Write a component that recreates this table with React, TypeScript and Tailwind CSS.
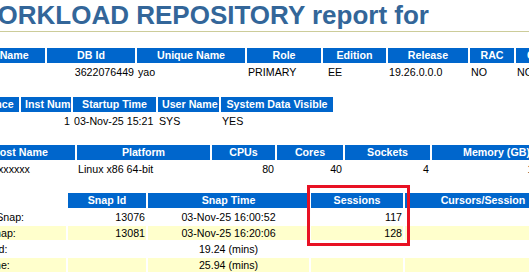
type Col = { label: string; w: string };
type Cell = { v?: string; cls?: string };

const dbCols: Col[] = [
  { label: "DB Name", w: "w-[80px]" },
  { label: "DB Id", w: "w-[88px]" },
  { label: "Unique Name", w: "w-[108px]" },
  { label: "Role", w: "w-[74px]" },
  { label: "Edition", w: "w-[63px]" },
  { label: "Release", w: "w-[80px]" },
  { label: "RAC", w: "w-[44px]" },
  { label: "CDB", w: "w-[45px]" },
];
const dbRows: Cell[][] = [
  [
    { v: "YAO" },
    { v: "3622076449", cls: "text-right" },
    { v: "yao" },
    { v: "PRIMARY" },
    { v: "EE", cls: "pl-[5px]" },
    { v: "19.26.0.0.0" },
    { v: "NO" },
    { v: "NO" },
  ],
];

const instCols: Col[] = [
  { label: "Instance", w: "w-[54px]" },
  { label: "Inst Num", w: "w-[50px]" },
  { label: "Startup Time", w: "w-[83px]" },
  { label: "User Name", w: "w-[61px]" },
  { label: "System Data Visible", w: "w-[112px]" },
];
const instRows: Cell[][] = [
  [
    { v: "yao" },
    { v: "1", cls: "text-right" },
    { v: "03-Nov-25 15:21" },
    { v: "SYS" },
    { v: "YES" },
  ],
];

const hostCols: Col[] = [
  { label: "Host Name", w: "w-[110px]" },
  { label: "Platform", w: "w-[133px]" },
  { label: "CPUs", w: "w-[63px]" },
  { label: "Cores", w: "w-[66px]" },
  { label: "Sockets", w: "w-[85px]" },
  { label: "Memory (GB)", w: "w-[129px]" },
];
const hostRows: Cell[][] = [
  [
    { v: "xxxxxxxxxxxx" },
    { v: "Linux x86 64-bit" },
    { v: "80", cls: "text-right" },
    { v: "40", cls: "text-right" },
    { v: "4", cls: "text-right" },
    { v: "1007.9", cls: "text-right" },
  ],
];

const snapCols: Col[] = [
  { label: "", w: "w-[101px]" },
  { label: "Snap Id", w: "w-[78px]" },
  { label: "Snap Time", w: "w-[161px]" },
  { label: "Sessions", w: "w-[92px]" },
  { label: "Cursors/Session", w: "w-[156px]" },
];
const snapRows: Cell[][] = [
  [
    { v: "Begin Snap:" },
    { v: "13076", cls: "text-right" },
    { v: "03-Nov-25 16:00:52", cls: "text-center" },
    { v: "117", cls: "text-right" },
    {},
  ],
  [
    { v: "End Snap:" },
    { v: "13081", cls: "text-right" },
    { v: "03-Nov-25 16:20:06", cls: "text-center" },
    { v: "128", cls: "text-right" },
    {},
  ],
  [{ v: "Elapsed:" }, {}, { v: "19.24 (mins)", cls: "text-center" }, {}, {}],
  [{ v: "DB Time:" }, {}, { v: "25.94 (mins)", cls: "text-center" }, {}, {}],
];

function AwrTable({
  cols,
  rows,
  className,
}: {
  cols: Col[];
  rows: Cell[][];
  className: string;
}) {
  return (
    <table
      className={`-ml-[37px] table-fixed border-separate border-spacing-[2px] whitespace-nowrap text-[8pt] leading-[12px] ${className}`}
    >
      <thead>
        <tr>
          {cols.map((c, i) => (
            <th
              key={i}
              className={`${c.w} ${
                c.label ? "bg-[#0066cc]" : "bg-white"
              } px-[4px] pt-[1px] pb-[2px] text-center font-bold text-white`}
            >
              {c.label}
            </th>
          ))}
        </tr>
      </thead>
      <tbody>
        {rows.map((r, ri) => (
          <tr key={ri}>
            {r.map((c, ci) => (
              <td
                key={ci}
                className={`${
                  ri % 2 ? "bg-[#ffffcc]" : "bg-white"
                } h-[14px] overflow-hidden p-[1px] align-top text-black ${c.cls ?? "text-left"}`}
              >
                {c.v}
              </td>
            ))}
          </tr>
        ))}
      </tbody>
    </table>
  );
}

export default function App() {
  return (
    <div className="relative h-[277px] w-[529px] overflow-hidden bg-white font-['Liberation_Sans',Arial,Helvetica,sans-serif]">
      <h1 className="-ml-[27px] border-b border-[#cccc99] text-[26px] leading-[31px] font-bold whitespace-nowrap text-[#336699]">
        WORKLOAD REPOSITORY report for
      </h1>

      <AwrTable cols={dbCols} rows={dbRows} className="mt-[14px] w-[600px]" />
      <AwrTable cols={instCols} rows={instRows} className="mt-[14px] w-[372px]" />
      <AwrTable cols={hostCols} rows={hostRows} className="mt-[13px] w-[600px]" />
      <AwrTable cols={snapCols} rows={snapRows} className="mt-[13px] w-[600px]" />

      {/* highlight drawn on the screenshot */}
      <div className="absolute top-[185px] left-[307px] h-[61px] w-[103px] border-[3px] border-[#e81123]" />
    </div>
  );
}
